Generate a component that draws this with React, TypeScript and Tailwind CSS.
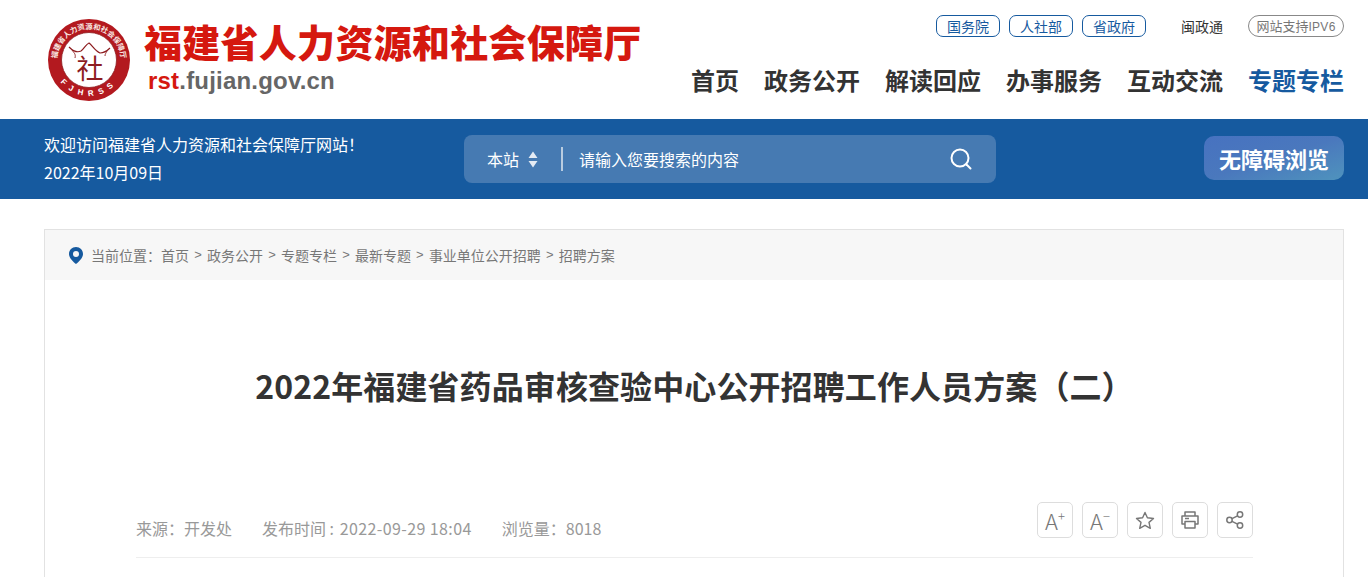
import React from "react";

const cjk = { fontFamily: '"Noto Sans CJK SC", sans-serif' };
const latin = { fontFamily: '"Liberation Sans", sans-serif' };

function Logo() {
  return (
    <svg width="84" height="84" viewBox="0 0 84 84" className="shrink-0">
      <defs>
        <path id="topArc" d="M10.8 50 A32 32 0 1 1 73.2 50" />
        <path id="botArc" d="M8.2 54.3 A36 36 0 0 0 75.8 54.3" />
      </defs>
      <circle cx="42" cy="42" r="41" fill="#b3191f" />
      <circle cx="42" cy="42" r="27.5" fill="#ffffff" />
      <circle cx="42" cy="42" r="27.5" fill="none" stroke="#8d1c1f" strokeWidth="0.8" />
      <text fill="#f8e7e2" fontSize="7.4" fontWeight="700" style={cjk}>
        <textPath href="#topArc" startOffset="50%" textAnchor="middle">福建省人力资源和社会保障厅</textPath>
      </text>
      <text fill="#ffffff" fontSize="8" fontWeight="700" letterSpacing="5.6" style={latin}>
        <textPath href="#botArc" startOffset="50%" textAnchor="middle">FJHRSS</textPath>
      </text>
      <path d="M22 29 C26 33 30 35 34 33 C37 31 39 26 42 25 C45 27 48 33 53 35 C57 35 60 33 63 30" fill="none" stroke="#8d1c1f" strokeWidth="1.2" />
      <path d="M25 32 C27 35 29 36 28 40 M60 33 C59 35 58 36 58 38" fill="none" stroke="#8d1c1f" strokeWidth="0.9" />
      <text x="43" y="61" textAnchor="middle" fill="#8d1c1f" fontSize="27" fontWeight="400" style={cjk}>社</text>
    </svg>
  );
}

function Chevrons() {
  return (
    <svg width="10" height="17" viewBox="0 0 10 17">
      <path d="M5 0.5 L9.5 7 H0.5 Z M5 16.5 L0.5 10 H9.5 Z" fill="#e4ebf4" />
    </svg>
  );
}

function SearchIcon() {
  return (
    <svg width="22" height="22" viewBox="0 0 22 22" fill="none" stroke="#fff" strokeWidth="2" strokeLinecap="round">
      <circle cx="10" cy="10" r="8.5" />
      <path d="M16.5 16.5 L20.5 20.5" />
    </svg>
  );
}

function Pin() {
  return (
    <svg width="14" height="17" viewBox="0 0 14 17" className="shrink-0">
      <path fillRule="evenodd" d="M7 0 C11 0 14 3 14 7 C14 11 9.5 15 7 17 C4.5 15 0 11 0 7 C0 3 3 0 7 0 Z M7 4 A3 3 0 1 0 7 10 A3 3 0 1 0 7 4 Z" fill="#165a9f" />
    </svg>
  );
}

function ToolBtn({ children }: { children: React.ReactNode }) {
  return (
    <div className="w-[36px] h-[36px] rounded-[5px] border border-[#dddddd] flex items-center justify-center text-[#777777] bg-white">
      {children}
    </div>
  );
}

const crumbs = ["首页", "政务公开", "专题专栏", "最新专题", "事业单位公开招聘", "招聘方案"];
const nav = ["首页", "政务公开", "解读回应", "办事服务", "互动交流"];

export default function App() {
  return (
    <div className="w-[1368px] h-[577px] overflow-hidden bg-white" style={cjk}>
      <header className="h-[119px] pl-[44px] pr-[24px] flex justify-between">
        <div className="flex pt-[18px] pl-[3px]">
          <Logo />
          <div className="ml-[13px]">
            <div className="text-[38px] leading-[44px] font-black text-[#d5180f] tracking-[0.28px] whitespace-nowrap mt-[1px]">福建省人力资源和社会保障厅</div>
            <div className="text-[24px] leading-[28px] font-bold text-[#666666] ml-[4px] mt-[4px] tracking-[0.2px]" style={latin}>
              <span className="text-[#d5180f]">rst</span>.fujian.gov.cn
            </div>
          </div>
        </div>
        <div className="flex flex-col items-end pt-[15px]">
          <div className="flex items-center h-[22px] text-[14px]">
            <div className="flex gap-[9px]">
              {["国务院", "人社部", "省政府"].map((t) => (
                <span key={t} className="w-[64px] h-[22px] rounded-[7px] border border-[#165a9f] text-[#165a9f] flex items-center justify-center leading-none">{t}</span>
              ))}
            </div>
            <span className="ml-[35px] text-[#333333] leading-none">闽政通</span>
            <span className="ml-[25px] w-[96px] h-[22px] rounded-[11px] border border-[#888888] text-[#777777] text-[13px] flex items-center justify-center leading-none whitespace-nowrap">
              <span>网站支持<span className="text-[12px] tracking-[0.3px]" style={latin}>IPV6</span></span>
            </span>
          </div>
          <nav className="flex items-center gap-[25px] mt-[26px] text-[24px] leading-[34px] font-bold text-[#333333] whitespace-nowrap">
            {nav.map((t) => <span key={t}>{t}</span>)}
            <span className="text-[#165a9f]">专题专栏</span>
          </nav>
        </div>
      </header>

      <div className="h-[80px] bg-[#165a9f] pl-[44px] pr-[24px] flex items-center text-white">
        <div className="w-[420px] text-[16px] leading-[28px] -mt-[3px]">
          <div>欢迎访问福建省人力资源和社会保障厅网站！</div>
          <div>2022年10月09日</div>
        </div>
        <div className="w-[532px] h-[48px] rounded-[8px] bg-[#467ab2] flex items-center text-[16px]">
          <span className="ml-[23px]">本站</span>
          <span className="ml-[9px] flex"><Chevrons /></span>
          <span className="ml-[23px] w-[2px] h-[24px] bg-[#b9cce0]" />
          <span className="ml-[16px] flex-1">请输入您要搜索的内容</span>
          <span className="mr-[24px] flex"><SearchIcon /></span>
        </div>
        <div className="ml-auto w-[140px] h-[44px] rounded-[10px] bg-gradient-to-br from-[#4772c0] via-[#4a78bd] to-[#4f93bd] flex items-center justify-center text-[22px] font-bold -mt-[2px] whitespace-nowrap">无障碍浏览</div>
      </div>

      <main className="ml-[44px] w-[1300px] mt-[30px] border border-[#e2e2e2] border-b-0 h-[348px]">
        <div className="h-[50px] bg-[#f7f7f7] flex items-center pl-[24px] text-[14px] text-[#777777]">
          <Pin />
          <span className="ml-[8px]">当前位置：</span>
          {crumbs.map((c, i) => (
            <span key={c} className="flex items-center whitespace-nowrap">
              {i > 0 && <span className="mx-[5.2px] text-[13px]" style={latin}>&gt;</span>}
              {c}
            </span>
          ))}
        </div>
        <div className="pl-[91px] pr-[90px]">
          <h1 className="mt-[83px] text-center text-[32px] leading-[44px] font-bold text-[#333333] tracking-[0.1px] whitespace-nowrap">2022年福建省药品审核查验中心公开招聘工作人员方案（二）</h1>
          <div className="mt-[95px] h-[56px] border-b border-[#eeeeee] flex justify-between items-start">
            <div className="flex text-[16px] leading-[24px] text-[#999999] mt-[14px] whitespace-nowrap">
              <span>来源：开发处</span>
              <span className="ml-[30px]">发布时间 : <span className="ml-[2px] tracking-[0.4px]">2022-09-29 18:04</span></span>
              <span className="ml-[30px]">浏览量：8018</span>
            </div>
            <div className="flex gap-[9px]">
              <ToolBtn>
                <span className="flex items-start text-[22px] leading-none font-light">A<span className="text-[13px] leading-none">+</span></span>
              </ToolBtn>
              <ToolBtn>
                <span className="flex items-start text-[22px] leading-none font-light">A<span className="text-[13px] leading-none">−</span></span>
              </ToolBtn>
              <ToolBtn>
                <svg width="20" height="19" viewBox="0 0 20 19" fill="none" stroke="#777" strokeWidth="1.4" strokeLinejoin="round">
                  <path d="M10 1.5 L12.4 6.8 L18.5 7.5 L14 11.4 L15.3 17.3 L10 14.3 L4.7 17.3 L6 11.4 L1.5 7.5 L7.6 6.8 Z" />
                </svg>
              </ToolBtn>
              <ToolBtn>
                <svg width="18" height="18" viewBox="0 0 18 18" fill="none" stroke="#777" strokeWidth="1.5" strokeLinejoin="round">
                  <path d="M4 5 V1 H14 V5" />
                  <path d="M4 13 H1 V5 H17 V13 H14" />
                  <path d="M4 10.5 H14 V17 H4 Z" />
                  <path d="M4 7.5 H8" />
                </svg>
              </ToolBtn>
              <ToolBtn>
                <svg width="18" height="18" viewBox="0 0 18 18" fill="none" stroke="#777" strokeWidth="1.5">
                  <circle cx="14" cy="3.5" r="2.7" />
                  <circle cx="3.5" cy="9" r="2.7" />
                  <circle cx="14" cy="14.5" r="2.7" />
                  <path d="M6 7.7 L11.6 4.8 M6 10.3 L11.6 13.2" />
                </svg>
              </ToolBtn>
            </div>
          </div>
        </div>
      </main>
    </div>
  );
}
